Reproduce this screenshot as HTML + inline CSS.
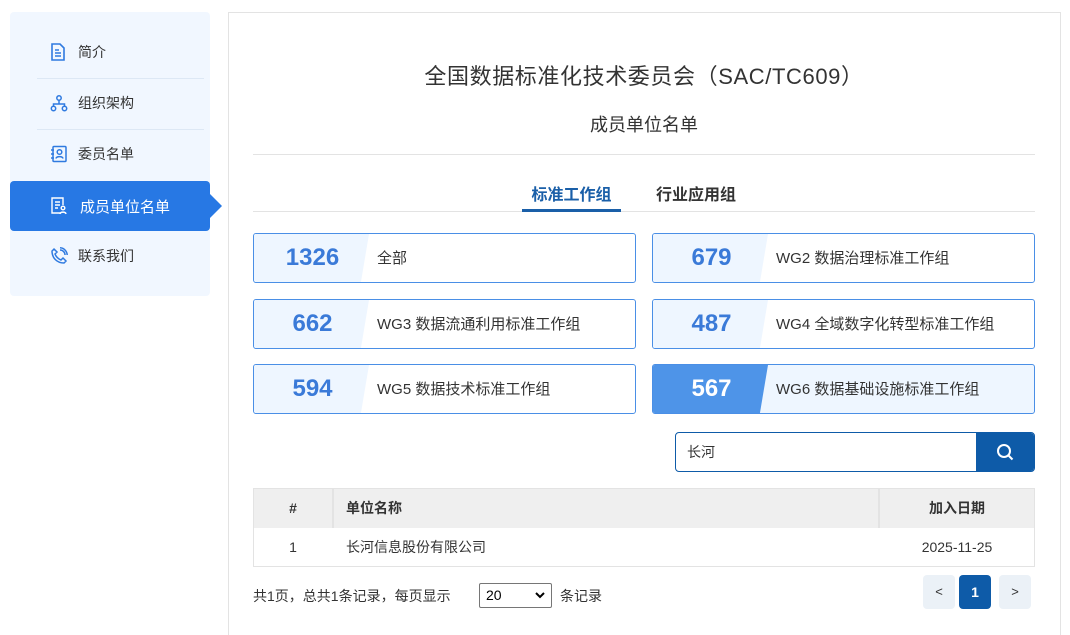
<!DOCTYPE html>
<html><head><meta charset="utf-8"><style>
*{box-sizing:border-box;margin:0;padding:0}
html,body{width:1070px;height:635px;overflow:hidden}
body{background:#fff;font-family:"Liberation Sans","Noto Sans CJK SC",sans-serif;color:#333;position:relative}
.abs{position:absolute}
.side{left:10px;top:12px;width:200px;height:284px;background:#f1f7ff;border-radius:4px}
.item{position:absolute;left:0;width:200px;height:50px;display:flex;align-items:center;font-size:14px;color:#333}
.item svg{position:absolute;left:40px}
.item span{position:absolute;left:68px}
.sep{position:absolute;left:27px;width:167px;height:1px;background:#dde8f5}
.active{background:#2778e4;color:#fff;border-radius:4px;left:0;width:200px}
.main{left:228px;top:12px;width:833px;height:623px;border:1px solid #e3e3e3;border-bottom:none}
.card{position:absolute;width:383px;height:50px;border:1px solid #4a8fe6;border-radius:3px;overflow:hidden;background:#fff}
.num{position:absolute;left:0;top:0;height:100%;width:115px;background:#eef6ff;clip-path:polygon(0 0,100% 0,93% 100%,0 100%);font-weight:bold;font-size:24px;color:#3a7ad8;display:flex;align-items:center;justify-content:center;padding-left:2px}
.lbl{position:absolute;left:123px;top:1px;line-height:48px;font-size:15px;color:#333}
.card.sel{background:#eef6ff}
.card.sel .num{background:#4e94e8;color:#fff}
.th{position:absolute;top:0;height:39px;line-height:39px;font-weight:bold;font-size:14px;background:#efefef}
.pb{position:absolute;top:575px;width:32px;height:34px;border-radius:4px;background:#ebf1f7;text-align:center;line-height:34px;font-size:13px;color:#333}
</style></head><body>
<div class="abs side">
 <div class="item" style="top:15px"><svg width="16" height="18" viewBox="0 0 16 18" fill="none" stroke="#2f7ae0" stroke-width="1.6"><path d="M2 1h8l4 4v12H2z"/><path d="M5 7h4M5 10h6M5 13h6"/></svg><span>简介</span></div>
 <div class="sep" style="top:66px"></div>
 <div class="item" style="top:66px"><svg width="18" height="18" viewBox="0 0 18 18" fill="none" stroke="#2f7ae0" stroke-width="1.5"><circle cx="9" cy="4" r="2.2"/><circle cx="3.5" cy="14.5" r="2.2"/><circle cx="14.5" cy="14.5" r="2.2"/><path d="M9 6.5v3.5M3.5 12.3V10h11v2.3"/></svg><span>组织架构</span></div>
 <div class="sep" style="top:117px"></div>
 <div class="item" style="top:117px"><svg width="18" height="18" viewBox="0 0 18 18" fill="none" stroke="#2f7ae0" stroke-width="1.5"><rect x="3" y="1.5" width="13" height="15" rx="1"/><path d="M1 5h3M1 9h3M1 13h3"/><circle cx="9.5" cy="7" r="2.3"/><path d="M6 13.5c.5-2.5 6.5-2.5 7 0"/></svg><span>委员名单</span></div>
 <div class="item active" style="top:169px"><svg width="18" height="18" viewBox="0 0 18 18" fill="none" stroke="#fff" stroke-width="1.4"><path d="M11 16H2V1h11v7"/><path d="M5 5h5M5 8h5M5 11h3"/><circle cx="13" cy="11" r="1.8"/><path d="M10 17c.3-2.5 5.7-2.5 6 0"/></svg><span style="left:70px;font-size:15px">成员单位名单</span></div>
 <div class="item" style="top:219px"><svg width="18" height="18" viewBox="0 0 18 18" fill="none" stroke="#2f7ae0" stroke-width="1.5"><path d="M4 2l3 3-2 2c1 2.5 3.5 5 6 6l2-2 3 3-2 2C7 16 2 11 2 4z"/><path d="M10 3a5 5 0 0 1 5 5M10 .8a7.5 7.5 0 0 1 7.2 7.2"/></svg><span>联系我们</span></div>
</div>
<div class="abs" style="left:210px;top:194px;width:0;height:0;border-top:12px solid transparent;border-bottom:12px solid transparent;border-left:12px solid #2778e4"></div>
<div class="abs main"></div>
<div class="abs" style="left:253px;top:59px;width:782px;text-align:center;font-size:22px;letter-spacing:0.6px;color:#333">全国数据标准化技术委员会（SAC/TC609）</div>
<div class="abs" style="left:253px;top:111px;width:782px;text-align:center;font-size:18px;color:#333">成员单位名单</div>
<div class="abs" style="left:253px;top:154px;width:782px;height:1px;background:#e3e3e3"></div>
<div class="abs" style="left:522px;top:181px;width:99px;text-align:center;font-size:16px;font-weight:bold;color:#1a5fa8">标准工作组</div>
<div class="abs" style="left:646px;top:181px;width:100px;text-align:center;font-size:16px;font-weight:bold;color:#333">行业应用组</div>
<div class="abs" style="left:253px;top:211px;width:782px;height:1px;background:#e3e3e3"></div>
<div class="abs" style="left:522px;top:209px;width:99px;height:3px;background:#1a5fa8"></div>
<div class="card" style="left:253px;top:233px"><div class="num">1326</div><div class="lbl">全部</div></div>
<div class="card" style="left:652px;top:233px"><div class="num">679</div><div class="lbl">WG2 数据治理标准工作组</div></div>
<div class="card" style="left:253px;top:299px"><div class="num">662</div><div class="lbl">WG3 数据流通利用标准工作组</div></div>
<div class="card" style="left:652px;top:299px"><div class="num">487</div><div class="lbl">WG4 全域数字化转型标准工作组</div></div>
<div class="card" style="left:253px;top:364px"><div class="num">594</div><div class="lbl">WG5 数据技术标准工作组</div></div>
<div class="card sel" style="left:652px;top:364px"><div class="num">567</div><div class="lbl">WG6 数据基础设施标准工作组</div></div>
<div class="abs" style="left:675px;top:432px;width:360px;height:40px;border:1px solid #0e5ba8;border-radius:4px;overflow:hidden">
 <div class="abs" style="left:11px;top:0;line-height:38px;font-size:14px;color:#333">长河</div>
 <div class="abs" style="left:300px;top:0;width:59px;height:38px;background:#0e5ba8"><svg class="abs" style="left:20px;top:10px" width="18" height="18" viewBox="0 0 18 18" fill="none" stroke="#fff" stroke-width="2"><circle cx="8" cy="8" r="6"/><path d="M12.5 12.5l4 4"/></svg></div>
</div>
<div class="abs" style="left:253px;top:488px;width:782px;height:79px;border:1px solid #e3e3e3">
 <div class="th" style="left:0;width:78px;text-align:center">#</div>
 <div class="th" style="left:80px;width:544px;padding-left:12px">单位名称</div>
 <div class="th" style="left:626px;width:154px;text-align:center">加入日期</div>
 <div class="abs" style="left:78px;top:0;width:2px;height:39px;background:#e3e3e3"></div>
 <div class="abs" style="left:624px;top:0;width:2px;height:39px;background:#e3e3e3"></div>
 <div class="abs" style="left:0;top:39px;width:78px;line-height:38px;text-align:center;font-size:14px">1</div>
 <div class="abs" style="left:92px;top:39px;line-height:38px;font-size:14px">长河信息股份有限公司</div>
 <div class="abs" style="left:626px;top:39px;width:154px;line-height:38px;text-align:center;font-size:14px">2025-11-25</div>
</div>
<div class="abs" style="left:253px;top:586px;font-size:14px;line-height:20px">共1页，总共1条记录，每页显示</div>
<div class="abs" style="left:479px;top:583px;width:73px;height:25px;border:1px solid #767676;border-radius:2px;font-size:14px;line-height:23px;padding-left:6px;color:#000">20<svg class="abs" style="left:55px;top:8px" width="10" height="7" viewBox="0 0 10 7" fill="none" stroke="#000" stroke-width="2"><path d="M1 1l4 4 4-4"/></svg></div>
<div class="abs" style="left:560px;top:586px;font-size:14px;line-height:20px">条记录</div>
<div class="pb" style="left:923px">&lt;</div>
<div class="pb" style="left:959px;background:#0e5ba8;color:#fff;font-weight:bold;font-size:14px">1</div>
<div class="pb" style="left:999px">&gt;</div>
</body></html>
